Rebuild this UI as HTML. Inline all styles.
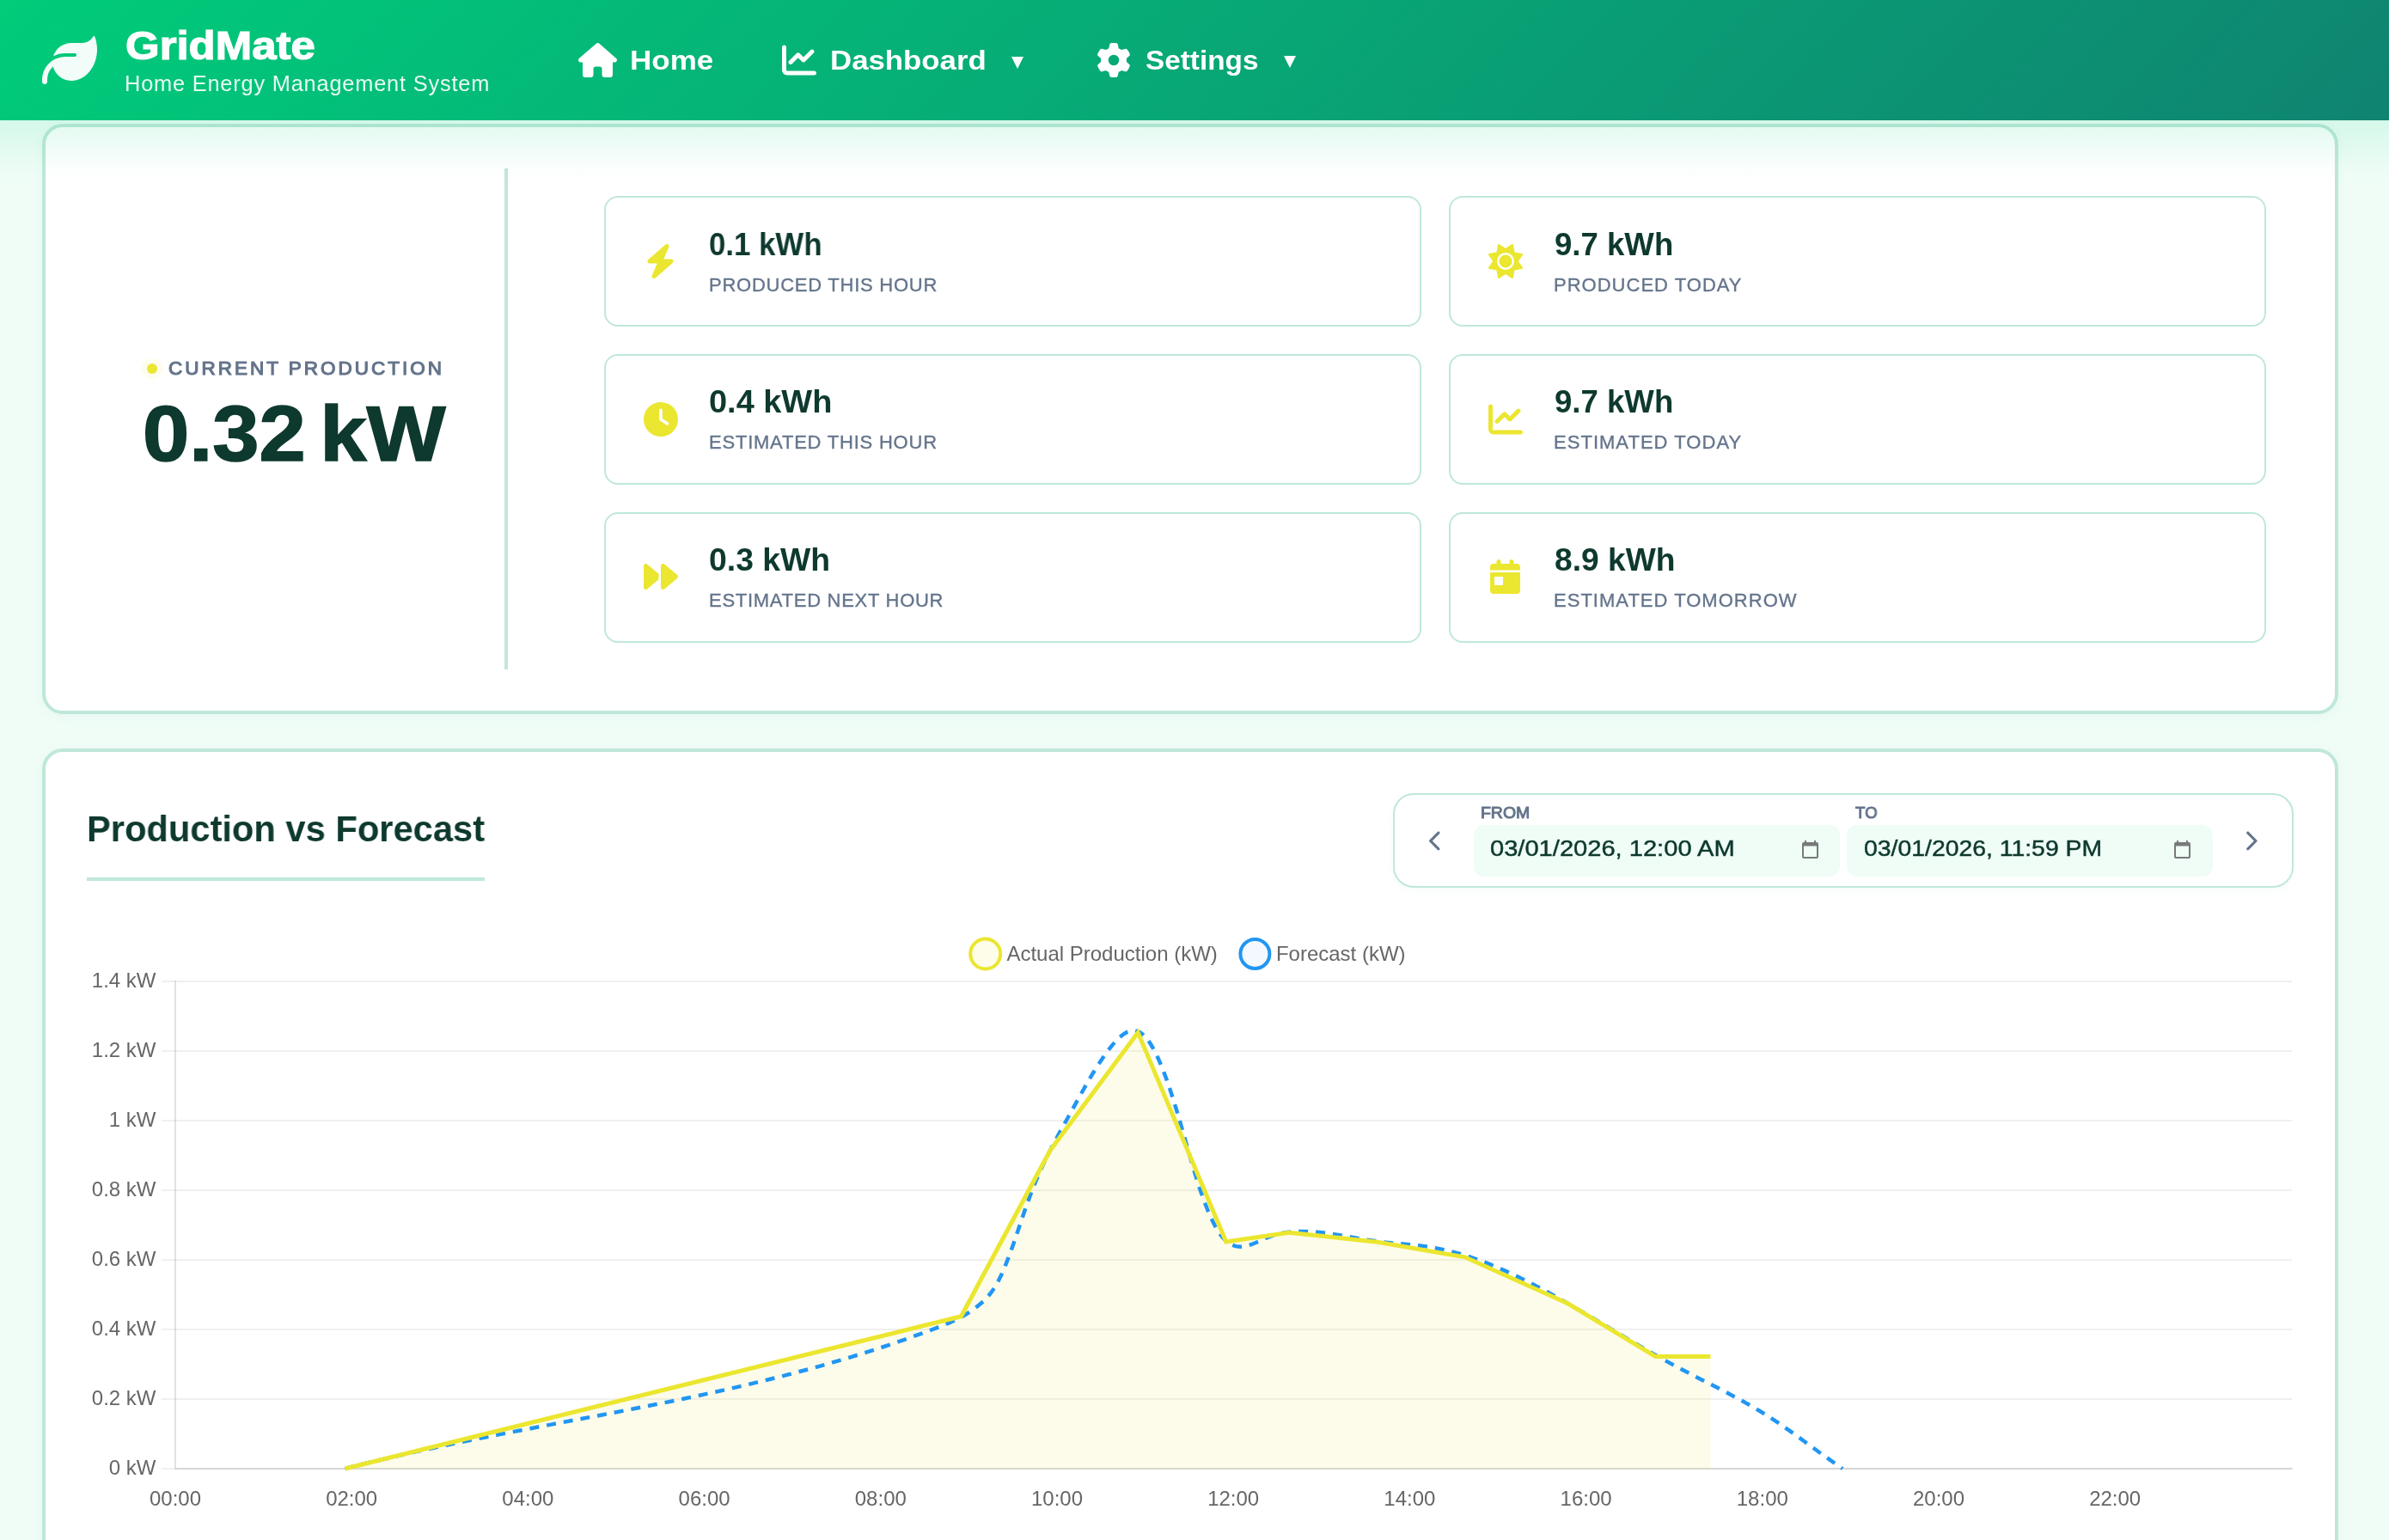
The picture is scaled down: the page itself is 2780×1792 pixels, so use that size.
<!DOCTYPE html>
<html lang="en"><head><meta charset="utf-8"><title>GridMate - Home Energy Management System</title>
<style>
html,body{margin:0;padding:0}
body{width:2780px;height:1792px;overflow:hidden;position:relative;background:#f0fdf7;font-family:"Liberation Sans",sans-serif}
h1,h2,p,label,a,button{margin:0;padding:0;font:inherit;border:0;background:none}
.t{position:absolute;white-space:nowrap;line-height:1;display:block;transform-origin:0 0;will-change:transform;font-family:"Liberation Sans",sans-serif}
.i{position:absolute;display:block;overflow:visible}
header{position:absolute;left:0;top:0;width:2780px;height:140px;z-index:5;background:linear-gradient(135deg,#00cc7a 0%,#0f8471 100%)}
.hshadow{position:absolute;left:0;top:140px;width:2780px;height:74px;z-index:4;pointer-events:none;
 background:linear-gradient(180deg,rgba(6,208,126,0.110) 0%,rgba(6,208,126,0.100) 12%,rgba(6,208,126,0.086) 25%,rgba(6,208,126,0.069) 38%,rgba(6,208,126,0.052) 50%,rgba(6,208,126,0.035) 62%,rgba(6,208,126,0.020) 74%,rgba(6,208,126,0.008) 86%,rgba(6,208,126,0.000) 100%)}
main{position:absolute;left:0;top:0;width:2780px;height:1792px;overflow:hidden}
.card{position:absolute;left:49px;width:2672px;box-sizing:border-box;background:#fff;border:4px solid #bfe7da;border-radius:24px;box-shadow:0 3px 14px rgba(5,150,105,.045)}
#c1{top:144px;height:687px}
#c2{top:871px;height:1000px}
.current{position:absolute;width:486px;height:583px;border-right:4px solid #bfe7da}
.stats{position:absolute;width:1934px;height:520px}
.stat{position:absolute;width:951px;height:152px;box-sizing:border-box;border:2px solid #bfe7da;border-radius:16px;background:#fff}
.dot{position:absolute;width:12px;height:12px;border-radius:50%;background:#ebe62f;box-shadow:0 0 0 6px rgba(235,230,47,.045),0 0 4px 7px rgba(235,230,47,.03)}
.uline{position:absolute;width:463px;height:4px;background:#bfe7da}
.range{position:absolute;width:1048px;height:110px;box-sizing:border-box;border:2px solid #bfe7da;border-radius:24px;background:#fff;box-shadow:0 3px 10px rgba(16,185,129,.04)}
.inp{position:absolute;height:60px;border-radius:12px;background:#effdf6}
.nb{position:absolute;width:40px;height:40px;display:block}
.chart{position:absolute;will-change:transform}
.chart text{font-family:"Liberation Sans",sans-serif;font-size:24px;fill:#666}
.caret{position:absolute;width:0;height:0;border-left:7px solid transparent;border-right:7px solid transparent;border-top:14px solid #fff}
</style></head>
<body>
<header>
<div class="brand">
<svg class="i" style="left:48.80px;top:38.00px" width="64.00" height="64.00" viewBox="0 0 512 512" aria-hidden="true"><path fill="rgba(255,255,255,.95)" d="M272 96c-78.600 0-145.100 51.500-167.700 122.500c33.600-17 71.500-26.500 111.700-26.500h88c8.800 0 16 7.200 16 16s-7.200 16-16 16H288 216s0 0 0 0c-16.600 0-32.700 1.900-48.200 5.400c-25.900 5.900-50 16.400-71.400 30.700c0 0 0 0 0 0C38.300 298.800 0 364.900 0 440v16c0 13.300 10.700 24 24 24s24-10.700 24-24V440c0-48.700 20.700-92.500 53.800-123.200C121.600 392.300 190.300 448 272 448l1 0c132.100-.7 239-130.900 239-291.400c0-42.600-7.500-83.100-21.100-119.600c-2.600-6.900-12.700-6.600-16.200-.1C455.900 72.100 418.700 96 376 96L272 96z"/></svg>
<h1 class="t" style="left:146.28px;top:30.97px;font-size:45.4px;font-weight:700;color:#fff;transform:scaleX(1.1225);-webkit-text-stroke:1.20px #fff;">GridMate</h1>
<p class="t" style="left:144.80px;top:84.50px;font-size:25.4px;letter-spacing:0.79px;font-weight:400;color:rgba(255,255,255,.9);">Home Energy Management System</p>
</div>
<nav>
<a class="nv"><svg class="i" style="left:673.00px;top:49.70px" width="45.00" height="40.00" viewBox="0 0 576 512" aria-hidden="true"><path fill="#fff" d="M575.800 255.500c0 18-15 32.100-32 32.100h-32l.7 160.200c0 2.700-.2 5.400-.5 8.100V472c0 22.100-17.900 40-40 40H456c-1.100 0-2.200 0-3.300-.1c-1.400 .1-2.800 .1-4.200 .1H416 392c-22.100 0-40-17.900-40-40V448 384c0-17.700-14.300-32-32-32H256c-17.700 0-32 14.300-32 32v64 24c0 22.100-17.900 40-40 40H160 128.100c-1.500 0-3-.1-4.500-.2c-1.200 .1-2.400 .2-3.600 .2H104c-22.100 0-40-17.900-40-40V360c0-.9 0-1.900 .1-2.800V287.600H32c-18 0-32-14-32-32.100c0-9 3-17 10-24L266.400 8c7-7 15-8 22-8s15 2 21 7L564.800 231.500c8 7 12 15 11 24z"/></svg><span class="t" style="left:733.18px;top:54.65px;font-size:31.6px;font-weight:700;color:#fff;transform:scaleX(1.1079);">Home</span></a>
<a class="nv"><svg class="i" style="left:910.20px;top:50.20px" width="40.00" height="40.00" viewBox="0 0 512 512" aria-hidden="true"><path fill="#fff" d="M64 64c0-17.700-14.300-32-32-32S0 46.300 0 64V400c0 44.200 35.800 80 80 80H480c17.700 0 32-14.300 32-32s-14.300-32-32-32H80c-8.800 0-16-7.200-16-16V64zm406.600 86.600c12.500-12.500 12.500-32.800 0-45.300s-32.800-12.500-45.300 0L320 210.700l-57.400-57.400c-12.500-12.500-32.800-12.500-45.300 0l-112 112c-12.500 12.500-12.500 32.800 0 45.300s32.800 12.500 45.300 0L240 221.300l57.400 57.400c12.500 12.500 32.800 12.500 45.300 0l128-128z"/></svg><span class="t" style="left:966.20px;top:54.65px;font-size:31.6px;font-weight:700;color:#fff;transform:scaleX(1.1013);">Dashboard</span><i class="caret" style="left:1177px;top:65.5px"></i></a>
<a class="nv"><svg class="i" style="left:1275.80px;top:50.00px" width="40.00" height="40.00" viewBox="0 0 512 512" aria-hidden="true"><path fill="#fff" d="M495.900 166.600c3.200 8.700 .5 18.400-6.400 24.600l-43.300 39.400c1.100 8.300 1.700 16.800 1.700 25.400s-.6 17.100-1.700 25.400l43.300 39.400c6.900 6.200 9.600 15.900 6.400 24.600c-4.400 11.900-9.700 23.300-15.800 34.300l-4.700 8.100c-6.600 11-14 21.400-22.100 31.200c-5.900 7.200-15.700 9.600-24.500 6.800l-55.700-17.700c-13.400 10.300-28.200 18.900-44 25.400l-12.500 57.100c-2 9.100-9 16.300-18.200 17.800c-13.800 2.300-28 3.500-42.500 3.500s-28.700-1.200-42.500-3.500c-9.200-1.500-16.200-8.700-18.200-17.800l-12.500-57.100c-15.800-6.500-30.600-15.100-44-25.400L83.100 425.900c-8.800 2.800-18.600 .3-24.500-6.800c-8.100-9.800-15.500-20.200-22.100-31.200l-4.700-8.100c-6.100-11-11.400-22.400-15.800-34.300c-3.200-8.700-.5-18.400 6.400-24.600l43.300-39.400C64.600 273.100 64 264.600 64 256s.6-17.100 1.700-25.400L22.400 191.200c-6.900-6.200-9.600-15.900-6.400-24.600c4.400-11.900 9.700-23.300 15.800-34.300l4.700-8.100c6.600-11 14-21.400 22.100-31.200c5.900-7.200 15.700-9.600 24.500-6.800l55.700 17.700c13.400-10.300 28.200-18.900 44-25.400l12.500-57.100c2-9.100 9-16.300 18.200-17.800C227.300 1.200 241.500 0 256 0s28.700 1.200 42.500 3.500c9.200 1.500 16.200 8.700 18.200 17.800l12.500 57.100c15.800 6.500 30.600 15.100 44 25.400l55.700-17.700c8.800-2.800 18.600-.3 24.500 6.800c8.100 9.800 15.500 20.200 22.100 31.200l4.700 8.100c6.100 11 11.400 22.400 15.800 34.300zM256 336a80 80 0 1 0 0-160 80 80 0 1 0 0 160z"/></svg><span class="t" style="left:1333.20px;top:54.90px;font-size:31.3px;font-weight:700;color:#fff;transform:scaleX(1.0646);">Settings</span><i class="caret" style="left:1494px;top:65px"></i></a>
</nav>
</header>
<div class="hshadow"></div>
<main>
<section class="card" id="c1">
<div class="current" style="left:48px;top:48px">
<i class="dot" style="left:70px;top:227px"></i>
<div class="t lbl" style="left:95.38px;top:222.38px;font-size:22.5px;letter-spacing:2.99px;font-weight:400;color:#64748b;-webkit-text-stroke:1.15px #64748b;">CURRENT PRODUCTION</div>
<div class="t val" style="left:65.19px;top:262.91px;font-size:91.3px;font-weight:700;color:#0e392e;transform:scaleX(1.0685);-webkit-text-stroke:1.60px #0e392e;word-spacing:-10.0px;">0.32 kW</div>
</div>
<div class="stats" style="left:650px;top:80px">
<div class="stat" style="left:0px;top:0px">
<svg class="i" style="left:46.40px;top:54.10px" width="35.00" height="40.00" viewBox="0 0 448 512" aria-hidden="true"><path fill="#ebe62f" d="M349.400 44.600c5.900-13.700 1.500-29.700-10.600-38.500s-28.600-8-39.900 1.800l-256 224c-10 8.800-13.600 22.900-8.900 35.300S50.700 288 64 288H175.500L98.600 467.400c-5.900 13.700-1.500 29.700 10.600 38.500s28.600 8 39.900-1.800l256-224c10-8.800 13.600-22.900 8.900-35.300s-16.600-20.700-30-20.700H272.500L349.400 44.600z"/></svg>
<div class="t val" style="left:120.45px;top:37.22px;font-size:36.6px;font-weight:700;color:#0e392e;transform:scaleX(0.9516);">0.1 kWh</div>
<div class="t lbl" style="left:120.08px;top:91.20px;font-size:22.0px;letter-spacing:0.75px;font-weight:400;color:#64748b;-webkit-text-stroke:0.35px #64748b;">PRODUCED THIS HOUR</div>
</div>
<div class="stat" style="left:0px;top:184px">
<svg class="i" style="left:43.90px;top:54.00px" width="40.00" height="40.00" viewBox="0 0 512 512" aria-hidden="true"><path fill="#ebe62f" d="M256 0a256 256 0 1 1 0 512A256 256 0 1 1 256 0zM232 120V256c0 8 4 15.500 10.700 20l96 64c11 7.400 25.900 4.400 33.300-6.700s4.400-25.900-6.700-33.300L280 243.200V120c0-13.300-10.700-24-24-24s-24 10.700-24 24z"/></svg>
<div class="t val" style="left:119.96px;top:35.92px;font-size:36.6px;font-weight:700;color:#0e392e;transform:scaleX(1.0370);">0.4 kWh</div>
<div class="t lbl" style="left:119.58px;top:90.30px;font-size:22.0px;letter-spacing:0.78px;font-weight:400;color:#64748b;-webkit-text-stroke:0.35px #64748b;">ESTIMATED THIS HOUR</div>
</div>
<div class="stat" style="left:0px;top:368px">
<svg class="i" style="left:43.90px;top:53.10px" width="40.00" height="40.00" viewBox="0 0 512 512" aria-hidden="true"><path fill="#ebe62f" d="M52.500 440.600c-9.500 7.900-22.800 9.700-34.100 4.400S0 428.400 0 416V96C0 83.600 7.200 72.300 18.400 67s24.500-3.600 34.100 4.400L224 214.300V256v41.700L52.500 440.600zM256 352V256 128 96c0-12.400 7.200-23.700 18.400-29s24.500-3.600 34.100 4.400l192 160c7.300 6.100 11.500 15.100 11.500 24.600s-4.200 18.500-11.500 24.600l-192 160c-9.500 7.900-22.800 9.700-34.100 4.400s-18.400-16.600-18.400-29V352z"/></svg>
<div class="t val" style="left:119.98px;top:35.92px;font-size:36.6px;font-weight:700;color:#0e392e;transform:scaleX(1.0215);">0.3 kWh</div>
<div class="t lbl" style="left:119.58px;top:90.00px;font-size:22.0px;letter-spacing:0.72px;font-weight:400;color:#64748b;-webkit-text-stroke:0.35px #64748b;">ESTIMATED NEXT HOUR</div>
</div>
<div class="stat" style="left:983px;top:0px">
<svg class="i" style="left:43.90px;top:54.10px" width="40.00" height="40.00" viewBox="0 0 512 512" aria-hidden="true"><path fill="#ebe62f" d="M361.500 1.200c5 2.100 8.600 6.600 9.600 11.900L391 121l107.900 19.800c5.300 1 9.800 4.600 11.900 9.600s1.500 10.700-1.600 15.200L446.900 256l62.300 90.300c3.100 4.500 3.700 10.200 1.600 15.200s-6.600 8.600-11.900 9.600L391 391 371.100 498.900c-1 5.300-4.600 9.800-9.600 11.900s-10.700 1.500-15.200-1.600L256 446.900l-90.300 62.300c-4.500 3.100-10.200 3.700-15.200 1.600s-8.600-6.600-9.600-11.900L121 391 13.100 371.100c-5.300-1-9.800-4.600-11.900-9.600s-1.500-10.700 1.600-15.200L65.100 256 2.800 165.700c-3.100-4.500-3.700-10.200-1.600-15.200s6.600-8.600 11.900-9.600L121 121 140.900 13.100c1-5.300 4.600-9.800 9.600-11.900s10.700-1.500 15.200 1.600L256 65.100 346.300 2.800c4.500-3.100 10.200-3.700 15.200-1.600zM160 256a96 96 0 1 1 192 0 96 96 0 1 1 -192 0zm224 0a128 128 0 1 0 -256 0 128 128 0 1 0 256 0z"/></svg>
<div class="t val" style="left:120.70px;top:37.22px;font-size:36.6px;font-weight:700;color:#0e392e;transform:scaleX(0.9972);">9.7 kWh</div>
<div class="t lbl" style="left:119.88px;top:91.20px;font-size:22.0px;letter-spacing:1.01px;font-weight:400;color:#64748b;-webkit-text-stroke:0.35px #64748b;">PRODUCED TODAY</div>
</div>
<div class="stat" style="left:983px;top:184px">
<svg class="i" style="left:43.90px;top:54.00px" width="40.00" height="40.00" viewBox="0 0 512 512" aria-hidden="true"><path fill="#ebe62f" d="M64 64c0-17.700-14.300-32-32-32S0 46.300 0 64V400c0 44.200 35.800 80 80 80H480c17.700 0 32-14.300 32-32s-14.300-32-32-32H80c-8.800 0-16-7.200-16-16V64zm406.600 86.600c12.500-12.500 12.500-32.800 0-45.300s-32.800-12.500-45.300 0L320 210.700l-57.400-57.400c-12.500-12.500-32.800-12.500-45.300 0l-112 112c-12.500 12.500-12.500 32.800 0 45.300s32.800 12.500 45.300 0L240 221.300l57.400 57.400c12.500 12.500 32.800 12.500 45.300 0l128-128z"/></svg>
<div class="t val" style="left:120.70px;top:35.92px;font-size:36.6px;font-weight:700;color:#0e392e;transform:scaleX(0.9972);">9.7 kWh</div>
<div class="t lbl" style="left:119.88px;top:90.30px;font-size:22.0px;letter-spacing:1.03px;font-weight:400;color:#64748b;-webkit-text-stroke:0.35px #64748b;">ESTIMATED TODAY</div>
</div>
<div class="stat" style="left:983px;top:368px">
<svg class="i" style="left:46.40px;top:53.10px" width="35.00" height="40.00" viewBox="0 0 448 512" aria-hidden="true"><path fill="#ebe62f" d="M128 0c17.700 0 32 14.300 32 32V64H288V32c0-17.700 14.300-32 32-32s32 14.300 32 32V64h48c26.500 0 48 21.500 48 48v48H0V112C0 85.500 21.500 64 48 64H96V32c0-17.700 14.300-32 32-32zM0 192H448V464c0 26.500-21.500 48-48 48H48c-26.500 0-48-21.500-48-48V192zm80 64c-8.800 0-16 7.200-16 16v96c0 8.800 7.200 16 16 16h96c8.800 0 16-7.200 16-16V272c0-8.800-7.200-16-16-16H80z"/></svg>
<div class="t val" style="left:120.78px;top:35.92px;font-size:36.6px;font-weight:700;color:#0e392e;transform:scaleX(1.0163);">8.9 kWh</div>
<div class="t lbl" style="left:119.98px;top:90.00px;font-size:22.0px;letter-spacing:1.02px;font-weight:400;color:#64748b;-webkit-text-stroke:0.35px #64748b;">ESTIMATED TOMORROW</div>
</div>
</div>
</section>
<section class="card" id="c2">
<h2 class="t" style="left:47.54px;top:68.62px;font-size:42.5px;font-weight:700;color:#0e392e;transform:scaleX(0.9803);">Production vs Forecast</h2>
<div class="uline" style="left:48px;top:146px"></div>
<div class="range" style="left:1568px;top:48px">
<button class="nb" style="left:27px;top:33px"><svg class="i" style="left:13.39px;top:8.10px" width="15.62" height="25.00" viewBox="0 0 320 512" aria-hidden="true"><path fill="#64748b" d="M9.400 233.400c-12.500 12.500-12.500 32.800 0 45.300l192 192c12.500 12.500 32.800 12.500 45.300 0s12.500-32.800 0-45.300L77.300 256 246.600 86.600c12.500-12.500 12.500-32.800 0-45.300s-32.800-12.500-45.300 0l-192 192z"/></svg></button>
<label class="t" style="left:99.97px;top:11.99px;font-size:18.8px;font-weight:400;color:#64748b;transform:scaleX(1.0346);-webkit-text-stroke:1.00px #64748b;">FROM</label>
<div class="inp" style="left:92px;top:35px;width:426px"><span class="t" style="left:19.38px;top:15.38px;font-size:25.9px;font-weight:400;color:#0e392e;transform:scaleX(1.1236);-webkit-text-stroke:.45px #0e392e;">03/01/2026, 12:00 AM</span><svg class="i" style="left:382.0px;top:18.0px" width="19" height="21" viewBox="0 0 19 21" aria-hidden="true"><path fill="#797a7a" d="M3 0h2v2h9V0h2v2h1a2 2 0 0 1 2 2v15a2 2 0 0 1-2 2H2a2 2 0 0 1-2-2V4a2 2 0 0 1 2-2h1zM2 6.4v12.6h15V6.4z"/></svg></div>
<label class="t" style="left:535.90px;top:11.99px;font-size:18.8px;font-weight:400;color:#64748b;transform:scaleX(0.9907);-webkit-text-stroke:1.00px #64748b;">TO</label>
<div class="inp" style="left:526px;top:35px;width:426px"><span class="t" style="left:20.20px;top:15.38px;font-size:25.9px;font-weight:400;color:#0e392e;transform:scaleX(1.0959);-webkit-text-stroke:.45px #0e392e;">03/01/2026, 11:59 PM</span><svg class="i" style="left:381.0px;top:18.0px" width="19" height="21" viewBox="0 0 19 21" aria-hidden="true"><path fill="#797a7a" d="M3 0h2v2h9V0h2v2h1a2 2 0 0 1 2 2v15a2 2 0 0 1-2 2H2a2 2 0 0 1-2-2V4a2 2 0 0 1 2-2h1zM2 6.4v12.6h15V6.4z"/></svg></div>
<button class="nb" style="left:976px;top:33px"><svg class="i" style="left:12.39px;top:8.10px" width="15.62" height="25.00" viewBox="0 0 320 512" aria-hidden="true"><path fill="#64748b" d="M310.600 233.400c12.500 12.500 12.500 32.800 0 45.300l-192 192c-12.500 12.500-32.800 12.500-45.300 0s-12.500-32.800 0-45.300L242.700 256 73.400 86.600c-12.500-12.500-12.500-32.800 0-45.300s32.800-12.500 45.300 0l192 192z"/></svg></button>
</div>
<svg class="chart" style="left:-53px;top:165px" width="2780" height="752" viewBox="0 1040 2780 752" role="img" aria-label="Production vs Forecast chart">
<g fill="#000" fill-opacity=".06">
<rect x="188" y="1708" width="2479" height="2"/>
<rect x="188" y="1627" width="2479" height="2"/>
<rect x="188" y="1546" width="2479" height="2"/>
<rect x="188" y="1465" width="2479" height="2"/>
<rect x="188" y="1384" width="2479" height="2"/>
<rect x="188" y="1303" width="2479" height="2"/>
<rect x="188" y="1222" width="2479" height="2"/>
<rect x="188" y="1141" width="2479" height="2"/>
</g>
<rect x="203" y="1141" width="2" height="569" fill="#000" fill-opacity=".115"/>
<rect x="205" y="1708" width="2463" height="2" fill="#000" fill-opacity=".11"/>
<g text-anchor="end">
<text x="181.5" y="1715.7">0 kW</text>
<text x="181.5" y="1634.7">0.2 kW</text>
<text x="181.5" y="1553.7">0.4 kW</text>
<text x="181.5" y="1472.7">0.6 kW</text>
<text x="181.5" y="1391.7">0.8 kW</text>
<text x="181.5" y="1310.7">1 kW</text>
<text x="181.5" y="1229.7">1.2 kW</text>
<text x="181.5" y="1148.7">1.4 kW</text>
</g><g text-anchor="middle">
<text x="204.0" y="1751.6">00:00</text>
<text x="409.2" y="1751.6">02:00</text>
<text x="614.4" y="1751.6">04:00</text>
<text x="819.6" y="1751.6">06:00</text>
<text x="1024.8" y="1751.6">08:00</text>
<text x="1230.0" y="1751.6">10:00</text>
<text x="1435.2" y="1751.6">12:00</text>
<text x="1640.4" y="1751.6">14:00</text>
<text x="1845.6" y="1751.6">16:00</text>
<text x="2050.8" y="1751.6">18:00</text>
<text x="2256.0" y="1751.6">20:00</text>
<text x="2461.2" y="1751.6">22:00</text>
</g>
<polygon points="401.5,1709.0 1118.5,1531.8 1222.0,1338.7 1324.2,1201.4 1426.8,1445.0 1500.0,1434.3 1602.6,1445.2 1704.7,1462.8 1824.4,1516.8 1926.5,1578.5 1990.5,1578.5 1990.5,1709.0 401.5,1709.0" fill="#ebe62f" fill-opacity=".1"/>
<path d="M401.5 1709.0 L413.5 1705.9 L425.5 1702.9 L437.5 1700.0 L449.5 1697.2 L461.5 1694.4 L473.5 1691.6 L485.5 1688.9 L497.5 1686.3 L509.5 1683.7 L521.5 1681.2 L533.5 1678.7 L545.5 1676.3 L557.5 1673.9 L569.5 1671.5 L581.5 1669.1 L593.5 1666.8 L605.5 1664.5 L617.5 1662.2 L629.5 1659.9 L641.5 1657.6 L653.5 1655.3 L665.5 1653.0 L677.5 1650.8 L689.5 1648.5 L701.5 1646.2 L713.5 1643.9 L725.5 1641.6 L737.5 1639.3 L749.5 1636.9 L761.5 1634.5 L773.5 1632.1 L785.5 1629.7 L797.5 1627.2 L809.5 1624.7 L821.5 1622.1 L833.5 1619.5 L845.5 1616.8 L857.5 1614.1 L869.5 1611.3 L881.5 1608.4 L893.5 1605.5 L905.5 1602.5 L917.5 1599.4 L929.5 1596.3 L941.5 1593.1 L953.5 1589.8 L965.5 1586.4 L977.5 1582.9 L989.5 1579.3 L1001.5 1575.6 L1013.5 1571.9 L1025.5 1568.0 L1037.5 1564.0 L1049.5 1559.9 L1061.5 1555.6 L1073.5 1551.3 L1085.5 1546.8 L1090.0 1545.1 L1093.0 1543.9 L1096.0 1542.8 L1099.0 1541.6 L1102.0 1540.3 L1105.0 1539.1 L1108.0 1537.7 L1111.0 1536.4 L1114.0 1534.9 L1117.0 1533.4 L1120.0 1531.7 L1123.0 1530.0 L1126.0 1528.2 L1129.0 1526.2 L1132.0 1524.2 L1135.0 1521.9 L1138.0 1519.6 L1141.0 1517.1 L1144.0 1514.4 L1147.0 1511.5 L1150.0 1508.2 L1153.0 1504.5 L1156.0 1500.3 L1159.0 1495.5 L1162.0 1490.1 L1165.0 1484.0 L1168.0 1477.2 L1171.0 1469.9 L1174.0 1462.1 L1177.0 1453.9 L1180.0 1445.4 L1183.0 1436.6 L1186.0 1427.7 L1189.0 1418.8 L1192.0 1410.0 L1195.0 1401.4 L1198.0 1393.2 L1201.0 1385.3 L1204.0 1377.7 L1207.0 1370.6 L1210.0 1363.7 L1213.0 1357.1 L1216.0 1350.7 L1219.0 1344.6 L1222.0 1338.7 L1225.0 1332.9 L1228.0 1327.2 L1231.0 1321.7 L1234.0 1316.2 L1237.0 1310.8 L1240.0 1305.4 L1243.0 1300.0 L1246.0 1294.5 L1249.0 1289.1 L1252.0 1283.6 L1255.0 1278.2 L1258.0 1272.8 L1261.0 1267.5 L1264.0 1262.2 L1267.0 1257.0 L1270.0 1251.9 L1273.0 1247.0 L1276.0 1242.1 L1279.0 1237.4 L1282.0 1232.9 L1285.0 1228.5 L1288.0 1224.3 L1291.0 1220.3 L1294.0 1216.6 L1297.0 1213.1 L1300.0 1209.8 L1303.0 1207.0 L1306.0 1204.5 L1309.0 1202.4 L1312.0 1200.8 L1315.0 1199.8 L1318.0 1199.3 L1321.0 1199.4 L1324.0 1200.2 L1327.0 1201.6 L1330.0 1203.8 L1333.0 1206.8 L1336.0 1210.5 L1339.0 1215.0 L1342.0 1220.1 L1345.0 1225.8 L1348.0 1232.2 L1351.0 1239.2 L1354.0 1246.7 L1357.0 1254.7 L1360.0 1263.2 L1363.0 1272.2 L1366.0 1281.6 L1369.0 1291.3 L1372.0 1301.4 L1375.0 1311.7 L1378.0 1322.2 L1381.0 1332.8 L1384.0 1343.2 L1387.0 1353.6 L1390.0 1363.6 L1393.0 1373.4 L1396.0 1382.7 L1399.0 1391.4 L1402.0 1399.6 L1405.0 1407.3 L1408.0 1414.4 L1411.0 1420.8 L1414.0 1426.6 L1417.0 1431.8 L1420.0 1436.3 L1423.0 1440.2 L1426.0 1443.3 L1429.0 1445.8 L1432.0 1447.8 L1435.0 1449.2 L1438.0 1450.1 L1441.0 1450.6 L1444.0 1450.7 L1447.0 1450.5 L1450.0 1449.9 L1453.0 1449.2 L1456.0 1448.2 L1459.0 1447.0 L1462.0 1445.7 L1465.0 1444.4 L1468.0 1443.0 L1471.0 1441.7 L1474.0 1440.4 L1477.0 1439.2 L1480.0 1438.1 L1483.0 1437.1 L1486.0 1436.3 L1489.0 1435.6 L1492.0 1434.9 L1495.0 1434.4 L1498.0 1433.9 L1500.0 1433.7 L1510.0 1432.9 L1520.0 1432.9 L1530.0 1433.5 L1540.0 1434.5 L1550.0 1435.9 L1560.0 1437.5 L1570.0 1439.2 L1580.0 1441.0 L1590.0 1442.7 L1600.0 1444.1 L1610.0 1445.4 L1620.0 1446.4 L1630.0 1447.3 L1640.0 1448.2 L1650.0 1449.3 L1660.0 1450.6 L1670.0 1452.2 L1680.0 1454.2 L1690.0 1456.6 L1700.0 1459.3 L1710.0 1462.5 L1720.0 1465.9 L1730.0 1469.7 L1740.0 1473.8 L1750.0 1478.1 L1760.0 1482.7 L1770.0 1487.5 L1780.0 1492.5 L1790.0 1497.7 L1800.0 1503.1 L1810.0 1508.6 L1820.0 1514.3 L1830.0 1520.0 L1840.0 1525.9 L1850.0 1531.8 L1860.0 1537.7 L1870.0 1543.7 L1880.0 1549.7 L1890.0 1555.6 L1900.0 1561.6 L1910.0 1567.4 L1920.0 1573.2 L1930.0 1578.9 L1940.0 1584.4 L1950.0 1589.8 L1960.0 1595.1 L1970.0 1600.3 L1980.0 1605.4 L1990.0 1610.5 L2000.0 1615.6 L2010.0 1620.8 L2020.0 1626.2 L2030.0 1631.6 L2040.0 1637.3 L2050.0 1643.3 L2060.0 1649.6 L2070.0 1656.2 L2080.0 1663.1 L2090.0 1670.2 L2100.0 1677.5 L2110.0 1684.8 L2120.0 1692.1 L2130.0 1699.2 L2140.0 1706.2 L2144.2 1709.0" fill="none" stroke="#2196f3" stroke-width="4.5" stroke-dasharray="11 9" stroke-linejoin="round"/>
<polyline points="401.5,1709.0 1118.5,1531.8 1222.0,1338.7 1324.2,1201.4 1426.8,1445.0 1500.0,1434.3 1602.6,1445.2 1704.7,1462.8 1824.4,1516.8 1926.5,1578.5 1990.5,1578.5" fill="none" stroke="#ebe62f" stroke-width="5" stroke-linejoin="miter"/>
<circle cx="1146.7" cy="1110" r="17.5" fill="#fdfde9" stroke="#ebe62f" stroke-width="4"/>
<text x="1171.4" y="1117.6">Actual Production (kW)</text>
<circle cx="1460.4" cy="1110" r="17" fill="#f3f9fe" stroke="#2196f3" stroke-width="4"/>
<text x="1484.9" y="1117.6">Forecast (kW)</text>
</svg>
</section>
</main>
</body></html>
